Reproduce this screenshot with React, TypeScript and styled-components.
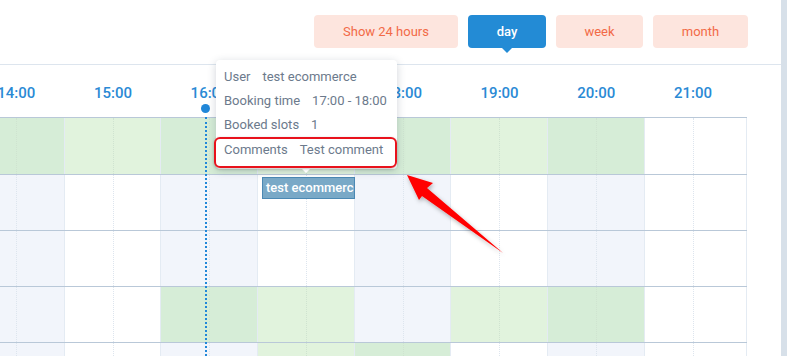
import React from "react";
import styled, { createGlobalStyle } from "styled-components";

const Global = createGlobalStyle`
  html, body { margin: 0; padding: 0; background: #fff; }
  body { font-family: Roboto, "Liberation Sans", sans-serif; }
`;

const Page = styled.div`
  display: flex;
  width: 787px;
  height: 356px;
  overflow: hidden;
`;

const Panel = styled.div`
  position: relative;
  width: 781px;
  height: 356px;
  background: #fff;
  overflow: hidden;
`;

const Strip = styled.div`
  flex: 1;
  background: #d7e0e9;
`;

const Toolbar = styled.div`
  height: 65px;
  box-sizing: border-box;
  border-bottom: 1px solid #dde5ee;
  display: flex;
  justify-content: flex-end;
  align-items: flex-start;
  gap: 10px;
  padding: 15px 33px 0 0;
`;

const ViewButton = styled.div<{ $w: number; $active?: boolean }>`
  position: relative;
  width: ${(p) => p.$w}px;
  height: 33px;
  border-radius: 4px;
  display: flex;
  align-items: center;
  justify-content: center;
  font-size: 13px;
  font-weight: ${(p) => (p.$active ? 500 : 400)};
  background: ${(p) => (p.$active ? "#238bd5" : "#fde5de")};
  color: ${(p) => (p.$active ? "#fff" : "#f26a47")};
  ${(p) =>
    p.$active &&
    `&::after {
      content: "";
      position: absolute;
      left: 50%;
      bottom: -5px;
      margin-left: -5px;
      border-left: 5px solid transparent;
      border-right: 5px solid transparent;
      border-top: 5px solid #238bd5;
    }`}
`;

const Timeline = styled.div`
  position: relative;
  margin-left: -32px;
  width: 779px;
`;

const cols = "repeat(7, 96.67px) 102.3px";

const HourRow = styled.div`
  display: grid;
  grid-template-columns: ${cols};
  height: 53px;
  box-sizing: border-box;
  border-bottom: 1px solid #b9c8d8;
`;

const HourLabel = styled.div`
  display: flex;
  justify-content: center;
  padding-top: 19px;
  font-size: 15px;
  font-weight: 500;
  color: #2a8ad5;
  width: 96.67px;
`;

const Row = styled.div<{ $h: number }>`
  display: grid;
  grid-template-columns: ${cols};
  height: ${(p) => p.$h}px;
  border-bottom: 1px solid #b9c8d8;
`;

const Cell = styled.div<{ $even: boolean; $booked: boolean }>`
  position: relative;
  box-sizing: border-box;
  border-right: 1px solid #e4ebf3;
  background: ${(p) =>
    p.$booked
      ? p.$even
        ? "#d6edd7"
        : "#e1f3dd"
      : p.$even
      ? "#f2f5fb"
      : "#ffffff"};
  &::before {
    content: "";
    position: absolute;
    left: 48px;
    top: 0;
    bottom: 0;
    border-left: 1px dotted ${(p) => (p.$booked ? "#cfe3d0" : "#dde5ee")};
  }
`;

const Event = styled.div`
  position: relative;
  z-index: 1;
  margin: 2px 0 0 4px;
  width: 93px;
  height: 22px;
  box-sizing: border-box;
  background: #79a9c7;
  border: 1px solid #4b89b4;
  color: #fff;
  font-size: 13px;
  font-weight: 500;
  line-height: 20px;
  padding-left: 3px;
  white-space: nowrap;
  overflow: hidden;
`;

const NowLine = styled.div`
  position: absolute;
  left: 204px;
  top: 104px;
  bottom: 0;
  width: 10px;
  display: flex;
  flex-direction: column;
  align-items: center;
  &::before {
    content: "";
    width: 9px;
    height: 9px;
    border-radius: 50%;
    background: #2187d8;
    margin-left: -7px;
  }
  &::after {
    content: "";
    flex: 1;
    margin-top: 4px;
    margin-left: -7px;
    border-left: 2px dotted #2187d8;
  }
`;

const Tooltip = styled.div`
  position: absolute;
  left: 216px;
  top: 60px;
  width: 181px;
  height: 109px;
  box-sizing: border-box;
  background: #fff;
  border-radius: 4px;
  box-shadow: 0 2px 8px rgba(40, 60, 80, 0.22);
  padding: 4px 0 0 8px;
  display: flex;
  flex-direction: column;
  z-index: 3;
  &::after {
    content: "";
    position: absolute;
    left: 86px;
    bottom: -4px;
    border-left: 4px solid transparent;
    border-right: 4px solid transparent;
    border-top: 4px solid #fff;
  }
`;

const TipRow = styled.div`
  display: flex;
  gap: 12px;
  height: 24.3px;
  align-items: center;
  font-size: 13px;
  color: #6c7a8c;
  white-space: nowrap;
`;

const Highlight = styled.div`
  position: absolute;
  left: 214px;
  top: 137px;
  width: 183px;
  height: 31px;
  box-sizing: border-box;
  border: 2px solid #e8121c;
  border-radius: 6px;
  box-shadow: 0 1px 3px rgba(0, 0, 0, 0.25);
  z-index: 4;
`;

const ArrowSvg = styled.svg`
  position: absolute;
  left: 395px;
  top: 165px;
  z-index: 5;
  overflow: visible;
`;

const hours = ["14:00", "15:00", "16:00", "17:00", "18:00", "19:00", "20:00", "21:00"];

const rows: { h: number; booked: number[]; event?: number }[] = [
  { h: 56, booked: [0, 1, 2, 3, 4, 5, 6] },
  { h: 55, booked: [], event: 3 },
  { h: 55, booked: [] },
  { h: 55, booked: [2, 3, 5, 6] },
  { h: 55, booked: [3, 4] },
];

export default function App() {
  return (
    <>
      <Global />
      <Page>
        <Panel>
          <Toolbar>
            <ViewButton $w={144}>Show 24 hours</ViewButton>
            <ViewButton $w={78} $active>
              day
            </ViewButton>
            <ViewButton $w={87}>week</ViewButton>
            <ViewButton $w={95}>month</ViewButton>
          </Toolbar>
          <Timeline>
            <HourRow>
              {hours.map((h) => (
                <HourLabel key={h}>{h}</HourLabel>
              ))}
            </HourRow>
            {rows.map((r, ri) => (
              <Row key={ri} $h={r.h}>
                {hours.map((_, ci) => (
                  <Cell
                    key={ci}
                    $even={ci % 2 === 0 && ci !== 7}
                    $booked={r.booked.includes(ci)}
                  >
                    {r.event === ci && <Event>test ecommerce</Event>}
                  </Cell>
                ))}
              </Row>
            ))}
          </Timeline>
          <NowLine />
          <Tooltip>
            <TipRow>
              <span>User</span>
              <span>test ecommerce</span>
            </TipRow>
            <TipRow>
              <span>Booking time</span>
              <span>17:00 - 18:00</span>
            </TipRow>
            <TipRow>
              <span>Booked slots</span>
              <span>1</span>
            </TipRow>
            <TipRow>
              <span>Comments</span>
              <span>Test comment</span>
            </TipRow>
          </Tooltip>
          <Highlight />
          <ArrowSvg width="120" height="100" viewBox="0 0 120 100">
            <defs>
              <filter id="sh" x="-20%" y="-20%" width="140%" height="140%">
                <feDropShadow dx="1" dy="2" stdDeviation="2" floodColor="#000" floodOpacity="0.3" />
              </filter>
            </defs>
            <polygon
              points="12,10 38,18 32,23 108,88 27,31 24,35"
              fill="#ff0000"
              filter="url(#sh)"
            />
          </ArrowSvg>
        </Panel>
        <Strip />
      </Page>
    </>
  );
}
